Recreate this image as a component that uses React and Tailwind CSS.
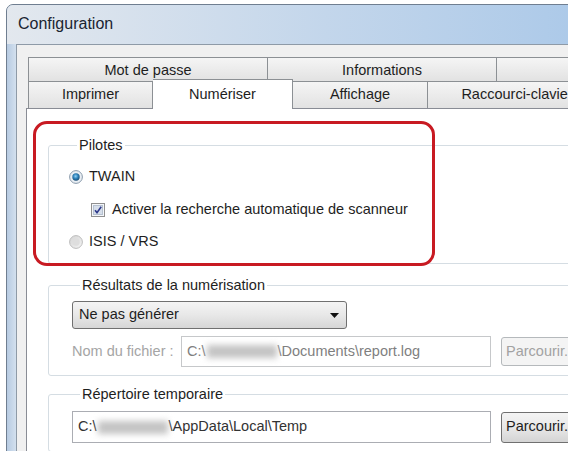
import React from "react";

// Win7-style radio button, drawn as a small svg
const Radio = ({ checked }) =>
	checked ? (
		<svg width="14" height="14" viewBox="0 0 14 14" className="shrink-0">
			<defs>
				<radialGradient id="radioOn" cx="0.45" cy="0.4" r="0.6">
					<stop offset="0" stopColor="#8fd0f5" />
					<stop offset="0.55" stopColor="#2a7fb8" />
					<stop offset="1" stopColor="#1b4d74" />
				</radialGradient>
			</defs>
			<circle cx="7" cy="7" r="6.4" fill="#e9eef3" stroke="#8a9aab" />
			<circle cx="7" cy="7" r="3.7" fill="url(#radioOn)" />
		</svg>
	) : (
		<svg width="14" height="14" viewBox="0 0 14 14" className="shrink-0">
			<defs>
				<linearGradient id="radioOff" x1="0" y1="0" x2="1" y2="1">
					<stop offset="0" stopColor="#d4d4d4" />
					<stop offset="1" stopColor="#f4f4f4" />
				</linearGradient>
			</defs>
			<circle cx="7" cy="7" r="6.4" fill="url(#radioOff)" stroke="#bdbdbd" />
			<circle cx="7" cy="7" r="3.7" fill="#dedede" />
		</svg>
	);

const Checkbox = () => (
	<svg width="14" height="14" viewBox="0 0 14 14" className="shrink-0">
		<rect x="0.5" y="0.5" width="13" height="13" fill="#f4f6f9" stroke="#8f8f8f" />
		<rect x="2.5" y="2.5" width="9" height="9" fill="#d6deea" stroke="#b6c1d0" />
		<path d="M4 7.2 L6 9.6 L10.2 3.8" fill="none" stroke="#2e3a8c" strokeWidth="1.6" />
	</svg>
);

// greyed smudge over the user name in paths
const Redacted = () => (
	<span className="inline-block w-[70px] h-[13px] bg-[#c4c4c4] blur-[3px] mx-[1px]" />
);

const Tab = ({ children, className }) => (
	<div
		className={
			"flex items-center justify-center border-t border-r border-[#8c9094] bg-linear-to-b from-[#f5f5f5] to-[#e2e2e2] whitespace-nowrap overflow-hidden " +
			className
		}
	>
		{children}
	</div>
);

const App = () => {
	return (
		<div className="relative w-[568px] h-[451px] overflow-hidden bg-white font-['Liberation_Sans',Arial,sans-serif] text-[14.5px] text-[#1e1e1e]">
			{/* window frame */}
			<div className="ml-[6px] mt-[4px] w-[640px] h-[520px] border border-[#6f7e90] rounded-t-[7px] bg-[#bfd1e5] flex flex-col overflow-hidden">
				{/* title bar */}
				<div className="h-[39px] shrink-0 flex items-center pl-[11px] pb-[2px] bg-linear-to-r from-[#e3e8ee] via-[#c3d6eb] to-[#a6c6e8] text-[16px] text-[#1a2430]">
					Configuration
				</div>

				<div className="flex flex-1">
					<div className="w-[9px] shrink-0 bg-linear-to-r from-[#b7cbe2] to-[#d3e0ee]" />

					{/* client area */}
					<div className="flex-1 border-l border-t border-[#8e9aa7] bg-[#f0f0f0] pt-[12px] pl-[9px]">
						{/* back row of tabs */}
						<div className="flex ml-[2px] h-[24px]">
							<Tab className="w-[240px] border-l pt-[2px]">Mot de passe</Tab>
							<Tab className="w-[229px] pt-[2px]">Informations</Tab>
							<Tab className="w-[200px] pt-[2px]" />
						</div>

						{/* front row of tabs */}
						<div className="flex items-end ml-[2px] h-[27px]">
							<Tab className="w-[125px] h-[27px] border-l">Imprimer</Tab>
							<div className="relative z-10 w-[140px] h-[30px] -mb-[1px] flex items-center justify-center border-t border-r border-[#8c9094] bg-white">
								Numériser
							</div>
							<Tab className="w-[135px] h-[27px]">Affichage</Tab>
							<Tab className="w-[179px] h-[27px]">Raccourci-clavier</Tab>
						</div>

						{/* tab page */}
						<div className="h-[400px] border border-[#898c95] bg-white pt-[28px] pl-[21px]">
							{/* Pilotes */}
							<fieldset className="border border-[#d5dde3] rounded-[3px] pl-[20px] pb-[11px]">
								<legend className="ml-[8px] px-[2px] leading-[17px]">Pilotes</legend>
								<div className="flex items-center gap-[6px] h-[20px] mt-[13px]">
									<Radio checked />
									<span>TWAIN</span>
								</div>
								<div className="flex items-center gap-[7px] h-[20px] mt-[13px] ml-[22px]">
									<Checkbox />
									<span>Activer la recherche automatique de scanneur</span>
								</div>
								<div className="flex items-center gap-[6px] h-[20px] mt-[12px]">
									<Radio />
									<span>ISIS / VRS</span>
								</div>
							</fieldset>

							{/* Résultats de la numérisation */}
							<fieldset className="mt-[13px] border border-[#d5dde3] rounded-[3px] pl-[23px] pb-[8px]">
								<legend className="ml-[8px] px-[2px] leading-[17px]">Résultats de la numérisation</legend>
								<div className="mt-[7px] w-[275px] h-[28px] flex items-center justify-between pl-[6px] pr-[7px] border border-[#707070] rounded-[3px] bg-linear-to-b from-[#f4f4f4] via-[#e8e8e8] to-[#d6d6d6]">
									<span>Ne pas générer</span>
									<svg width="9" height="5" viewBox="0 0 9 5">
										<path d="M0 0 H9 L4.5 5 Z" fill="#111" />
									</svg>
								</div>
								<div className="mt-[7px] flex items-center">
									<span className="w-[109px] text-[#a5a5a5]">Nom du fichier :</span>
									<div className="w-[310px] h-[31px] flex items-center pl-[5px] border border-[#c6c8ca] bg-white text-[#7f7f7f]">
										C:\<Redacted />\Documents\report.log
									</div>
									<div className="ml-[10px] w-[84px] h-[29px] shrink-0 flex items-center pl-[4px] border border-[#b5b9bc] rounded-[3px] bg-[#f4f4f4] text-[#a2a2a2]">
										Parcourir...
									</div>
								</div>
							</fieldset>

							{/* Répertoire temporaire */}
							<fieldset className="mt-[10px] border border-[#d5dde3] rounded-[3px] pl-[23px] pb-[8px]">
								<legend className="ml-[8px] px-[2px] leading-[17px]">Répertoire temporaire</legend>
								<div className="mt-[8px] flex items-center">
									<div className="w-[419px] h-[32px] flex items-center pl-[5px] border border-[#abadb3] bg-white text-[#333]">
										C:\<Redacted />\AppData\Local\Temp
									</div>
									<div className="ml-[10px] w-[84px] h-[31px] shrink-0 flex items-center pl-[4px] border border-[#707070] rounded-[3px] bg-linear-to-b from-[#f4f4f4] via-[#e8e8e8] to-[#d4d4d4]">
										Parcourir...
									</div>
								</div>
							</fieldset>
						</div>
					</div>
				</div>
			</div>

			{/* red callout around the driver options */}
			<div className="absolute left-[33px] top-[121px] w-[402px] h-[145px] rounded-[14px] border-[3px] border-[#c81a22]" />
		</div>
	);
};

export default App;
